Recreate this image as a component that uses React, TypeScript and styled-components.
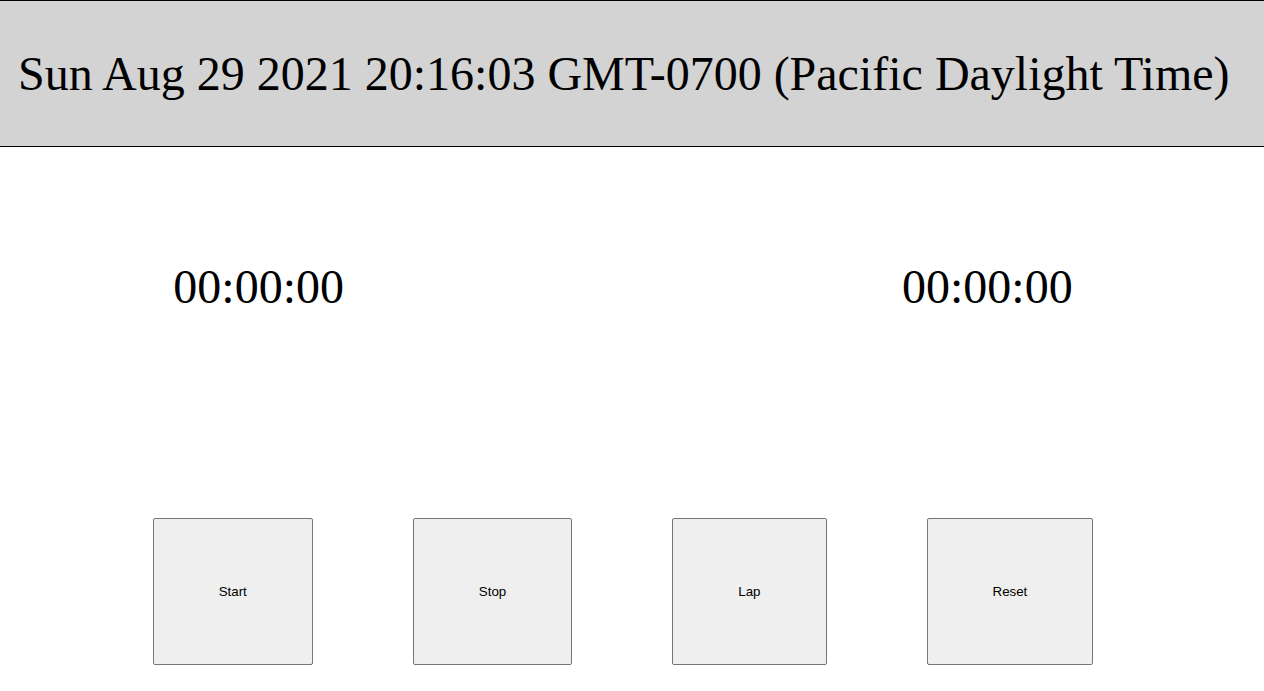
import React from "react";
import styled, { createGlobalStyle } from "styled-components";

const Global = createGlobalStyle`
  html, body { margin: 0; padding: 0; background: #ffffff; }
  body { font-family: "Liberation Serif", "Times New Roman", serif; color: #000; }
`;

const Page = styled.div`
  display: flex;
  flex-direction: column;
  width: 1264px;
`;

const Header = styled.header`
  background: #d3d3d3;
  border-top: 1px solid #000;
  border-bottom: 1px solid #000;
  padding: 46px 18px;
`;

const DateText = styled.div`
  font-family: "Liberation Serif", "Times New Roman", serif;
  font-size: 48px;
  line-height: 53px;
  white-space: nowrap;
`;

const Main = styled.main`
  display: flex;
  flex-direction: column;
  padding-right: 18px;
`;

const Timers = styled.div`
  display: flex;
  justify-content: center;
  gap: 558px;
  margin-top: 113px;
`;

const TimerText = styled.div`
  font-family: "Liberation Serif", "Times New Roman", serif;
  font-size: 48px;
  line-height: 53px;
`;

const Controls = styled.div`
  display: flex;
  justify-content: center;
  gap: 100px;
  margin-top: 205px;
`;

const ControlButton = styled.button`
  font-family: "Liberation Sans", Arial, sans-serif;
  font-size: 13.333px;
  line-height: 15px;
  color: #000;
  background: #efefef;
  border: 1px solid #767676;
  border-radius: 2px;
  padding: 65px 65px;
  cursor: pointer;
`;

export default function App() {
  return (
    <Page>
      <Global />
      <Header>
        <DateText>Sun Aug 29 2021 20:16:03 GMT-0700 (Pacific Daylight Time)</DateText>
      </Header>
      <Main>
        <Timers>
          <TimerText>00:00:00</TimerText>
          <TimerText>00:00:00</TimerText>
        </Timers>
        <Controls>
          <ControlButton>Start</ControlButton>
          <ControlButton>Stop</ControlButton>
          <ControlButton>Lap</ControlButton>
          <ControlButton>Reset</ControlButton>
        </Controls>
      </Main>
    </Page>
  );
}
